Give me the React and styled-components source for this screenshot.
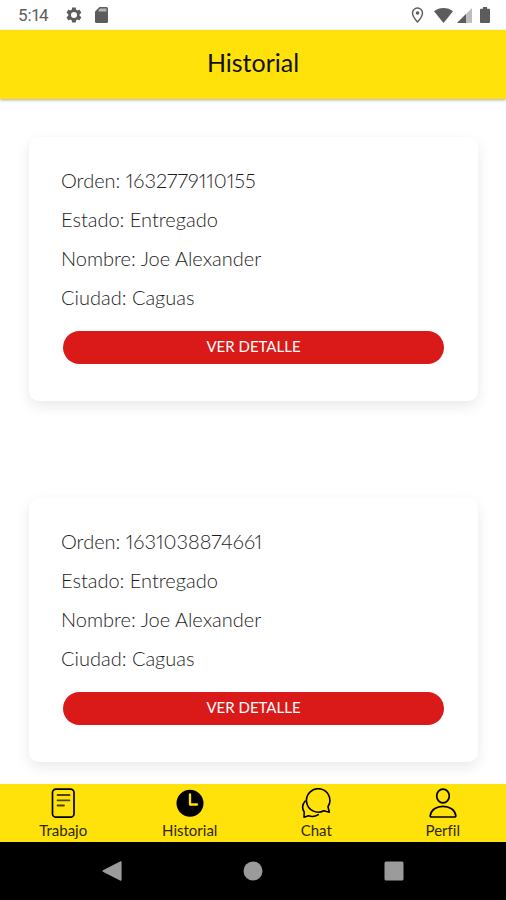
import React from 'react'
import styled, { createGlobalStyle } from 'styled-components'

const GlobalStyle = createGlobalStyle`
	:root {
		--color-primary: #ffe209;
		--color-danger: #da1a18;
		--color-text: #1c1c1c;
		--color-status: #5c5c5c;
		--color-system: #9b9b9b;
	}

	* {
		box-sizing: border-box;
	}

	body {
		margin: 0;
		background-color: #fff;
		font-family: Lato, 'Open Sans', sans-serif;
		font-variant-numeric: proportional-nums;
		font-variant-ligatures: no-common-ligatures;
	}
`

const Screen = styled.div`
	display: flex;
	flex-direction: column;
	min-height: 100vh;
`

const StatusBar = styled.div`
	display: flex;
	align-items: center;
	justify-content: space-between;
	height: 30px;
	padding: 0 16px 0 18px;
	color: var(--color-status);
	font-family: Roboto, sans-serif;
	font-size: 17px;
	line-height: 20px;

	svg {
		display: block;
	}
`

const StatusGroup = styled.div`
	display: flex;
	align-items: center;
	gap: ${({ $gap }) => $gap}px;
`

const Header = styled.header`
	position: sticky;
	top: 0;
	z-index: 1;
	display: flex;
	align-items: center;
	justify-content: center;
	height: 69px;
	padding-bottom: 6px;
	background-color: var(--color-primary);
	box-shadow: 0 1px 3px rgba(0, 0, 0, 0.35);

	h1 {
		margin: 0;
		color: #111;
		font-size: 25px;
		font-weight: 400;
		line-height: 30px;
	}
`

const OrderList = styled.main`
	flex: 1;
	display: flex;
	flex-direction: column;
	gap: 97px;
	padding: 38px 28px 22px 29px;
`

const Card = styled.article`
	padding: 24px 32px 37px;
	border-radius: 10px;
	background-color: #fff;
	box-shadow: 0 5px 14px rgba(0, 0, 0, 0.09);

	p {
		margin: 0;
		color: var(--color-text);
		font-size: 20px;
		font-weight: 300;
		line-height: 39px;
	}
`

const DetailButton = styled.button`
	display: block;
	width: calc(100% - 4px);
	height: 33px;
	margin: 14px 2px 0;
	padding: 0 0 4px;
	border: none;
	border-radius: 17px;
	background-color: var(--color-danger);
	color: #fff;
	font-family: inherit;
	font-size: 15px;
	line-height: 20px;
	text-transform: uppercase;
	cursor: pointer;
`

const Footer = styled.footer`
	position: sticky;
	bottom: 0;
`

const TabBar = styled.nav`
	display: flex;
	background-color: var(--color-primary);
`

const Tab = styled.a`
	flex: 1;
	display: flex;
	flex-direction: column;
	align-items: center;
	padding-top: 4px;
	color: #2e2905;
	font-size: 15px;
	line-height: 24px;
	text-decoration: none;

	svg {
		display: block;
	}
`

const SystemBar = styled.div`
	display: flex;
	height: 58px;
	padding: 0 42px;
	background-color: #000;
`

const SystemButton = styled.button`
	flex: 1;
	display: flex;
	align-items: center;
	justify-content: center;
	padding: 0;
	border: none;
	background: none;
	color: var(--color-system);
`

const GearIcon = () => (
	<svg width='18' height='18' viewBox='0 0 24 24' fill='currentColor'>
		<path
			fillRule='evenodd'
			d='M19.4 13c.1-.3.1-.7.1-1s0-.7-.1-1l2.1-1.6c.2-.2.2-.4.1-.7l-2-3.4c-.1-.2-.4-.3-.6-.2l-2.5 1c-.5-.4-1.1-.7-1.7-1l-.4-2.6c0-.3-.2-.5-.5-.5h-4c-.2 0-.5.2-.5.4l-.4 2.7c-.6.2-1.1.6-1.7 1l-2.5-1c-.2-.1-.5 0-.6.2l-2 3.4c-.1.2-.1.5.1.7l2.1 1.6c0 .3-.1.7-.1 1s0 .7.1 1l-2.1 1.6c-.2.2-.2.4-.1.7l2 3.4c.1.2.4.3.6.2l2.5-1c.5.4 1.1.7 1.7 1l.4 2.6c0 .3.2.5.5.5h4c.2 0 .5-.2.5-.4l.4-2.7c.6-.2 1.1-.6 1.7-1l2.5 1c.2.1.5 0 .6-.2l2-3.4c.1-.2.1-.5-.1-.7zM12 16a4 4 0 1 1 0-8 4 4 0 0 1 0 8z'
		/>
	</svg>
)

const SdCardIcon = () => (
	<svg width='13' height='16' viewBox='0 0 13 16' fill='currentColor'>
		<path d='M4.5 0h7A1.5 1.5 0 0 1 13 1.5v13a1.5 1.5 0 0 1-1.5 1.5h-10A1.5 1.5 0 0 1 0 14.5V4.5z' />
		<path d='M5 1.5h6.5v3H3.5v-1.5z' fill='#fff' opacity='0.55' />
	</svg>
)

const PinIcon = () => (
	<svg width='13' height='16' viewBox='0 0 13 16' fill='none'>
		<path
			d='M6.5 1a5 5 0 0 1 5 5c0 3.5-5 9-5 9s-5-5.5-5-9a5 5 0 0 1 5-5z'
			stroke='currentColor'
			strokeWidth='1.4'
		/>
		<circle cx='6.5' cy='6' r='1.8' fill='currentColor' />
	</svg>
)

const WifiIcon = () => (
	<svg width='19' height='15' viewBox='0 0 19 15' fill='currentColor'>
		<path d='M9.5 15 0 3.3C2.6 1.2 6 0 9.5 0S16.4 1.2 19 3.3z' />
	</svg>
)

const SignalIcon = () => (
	<svg width='15' height='15' viewBox='0 0 15 15' fill='currentColor'>
		<path d='M15 0v15H0z' opacity='0.4' />
		<path d='M9 6v9H0z' />
	</svg>
)

const BatteryIcon = () => (
	<svg width='10' height='16' viewBox='0 0 10 16' fill='currentColor'>
		<path d='M3 0h4v1.7h2A1 1 0 0 1 10 2.7V15a1 1 0 0 1-1 1H1a1 1 0 0 1-1-1V2.7a1 1 0 0 1 1-1h2z' />
	</svg>
)

const JobIcon = () => (
	<svg width='30' height='30' viewBox='0 0 30 30' fill='none' stroke='#000'>
		<rect x='4.5' y='1.2' width='21.5' height='28' rx='3.5' strokeWidth='1.7' />
		<path
			d='M9.5 7h12M9.5 12.3h12M9.5 17.5h6.5'
			stroke='#4d4403'
			strokeWidth='1.8'
			strokeLinecap='round'
		/>
	</svg>
)

const ClockIcon = () => (
	<svg width='30' height='30' viewBox='0 0 30 30' fill='none'>
		<circle cx='15' cy='15.3' r='13.5' fill='#000' />
		<path
			d='M15 6.5v10h7'
			stroke='var(--color-primary)'
			strokeWidth='2.3'
			strokeLinecap='round'
			strokeLinejoin='round'
		/>
	</svg>
)

const ChatIcon = () => (
	<svg
		width='30'
		height='30'
		viewBox='0 0 30 30'
		fill='none'
		stroke='#000'
		strokeWidth='1.6'
		strokeLinecap='round'
		strokeLinejoin='round'>
		<path d='M27 18.8 28.3 24.2 22.8 22.7A11.7 11.7 0 1 1 27 18.8z' />
		<path d='M4.2 13C1.5 16 1 20.5 3.2 24.2L3 29.2 7.5 27.8C10.8 29 14.5 28.5 17.3 26.6' />
	</svg>
)

const ProfileIcon = () => (
	<svg width='30' height='30' viewBox='0 0 30 30' fill='none' stroke='#000' strokeWidth='1.7'>
		<ellipse cx='15' cy='8' rx='6.3' ry='6.9' />
		<path
			d='M3.5 29C2.6 29 2.1 28.5 2.2 27.6 3 21.8 8.5 18.3 15 18.3S27 21.8 27.8 27.6C27.9 28.5 27.4 29 26.5 29z'
			strokeLinejoin='round'
		/>
	</svg>
)

const orders = [
	{ id: '1632779110155', status: 'Entregado', name: 'Joe Alexander', city: 'Caguas' },
	{ id: '1631038874661', status: 'Entregado', name: 'Joe Alexander', city: 'Caguas' },
]

const tabs = [
	{ label: 'Trabajo', href: '#trabajo', Icon: JobIcon },
	{ label: 'Historial', href: '#historial', Icon: ClockIcon, active: true },
	{ label: 'Chat', href: '#chat', Icon: ChatIcon },
	{ label: 'Perfil', href: '#perfil', Icon: ProfileIcon },
]

const OrderCard = ({ order }) => {
	return (
		<Card>
			<p>Orden: {order.id}</p>
			<p>Estado: {order.status}</p>
			<p>Nombre: {order.name}</p>
			<p>Ciudad: {order.city}</p>
			<DetailButton type='button'>Ver detalle</DetailButton>
		</Card>
	)
}

const App = () => {
	return (
		<Screen>
			<GlobalStyle />
			<StatusBar>
				<StatusGroup $gap={16}>
					<time>5:14</time>
					<StatusGroup $gap={12}>
						<GearIcon />
						<SdCardIcon />
					</StatusGroup>
				</StatusGroup>
				<StatusGroup $gap={8}>
					<StatusGroup $gap={10}>
						<PinIcon />
						<StatusGroup $gap={4}>
							<WifiIcon />
							<SignalIcon />
						</StatusGroup>
					</StatusGroup>
					<BatteryIcon />
				</StatusGroup>
			</StatusBar>
			<Header>
				<h1>Historial</h1>
			</Header>
			<OrderList>
				{orders.map((order) => (
					<OrderCard key={order.id} order={order} />
				))}
			</OrderList>
			<Footer>
				<TabBar>
					{tabs.map(({ label, href, Icon, active }) => (
						<Tab key={label} href={href} aria-current={active ? 'page' : undefined}>
							<Icon />
							{label}
						</Tab>
					))}
				</TabBar>
				<SystemBar>
					<SystemButton type='button' aria-label='Atrás'>
						<svg width='20' height='20' viewBox='0 0 20 20' fill='currentColor'>
							<path d='M18.5 0.3A0.8 0.8 0 0 1 19.6 1V19a0.8 0.8 0 0 1-1.1 0.7L0.9 10.7a0.8 0.8 0 0 1 0-1.4z' />
						</svg>
					</SystemButton>
					<SystemButton type='button' aria-label='Inicio'>
						<svg width='20' height='20' viewBox='0 0 20 20' fill='currentColor'>
							<circle cx='10' cy='10' r='9.5' />
						</svg>
					</SystemButton>
					<SystemButton type='button' aria-label='Recientes'>
						<svg width='20' height='20' viewBox='0 0 20 20' fill='currentColor'>
							<rect x='0.5' y='0.5' width='19' height='19' rx='1.5' />
						</svg>
					</SystemButton>
				</SystemBar>
			</Footer>
		</Screen>
	)
}

export default App
